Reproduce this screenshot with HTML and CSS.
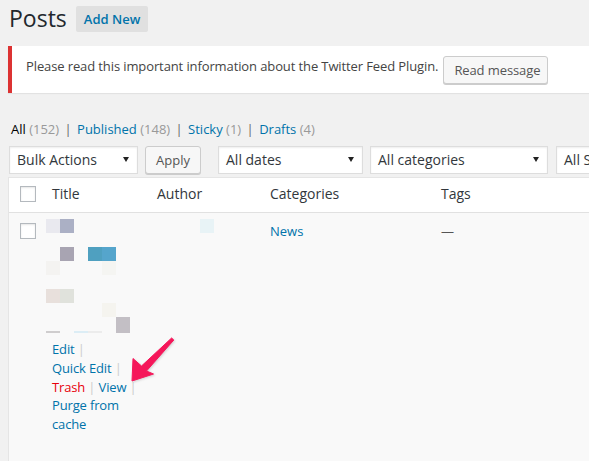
FILE: index.html
```html
<!DOCTYPE html>
<html>
<head>
<meta charset="utf-8">
<link rel="stylesheet" href="styles.css">
</head>
<body>
<div class="wrap">
  <div class="page-head">
    <h1 class="page-title">Posts</h1>
    <a class="add-new">Add New</a>
  </div>

  <div class="notice">
    <p class="notice-text">Please read this important information about the Twitter Feed Plugin.</p>
    <button class="btn btn-read">Read message</button>
  </div>

  <ul class="subsubsub">
    <li><a class="current">All <span class="count">(152)</span></a> <span class="sep">|</span></li>
    <li><a>Published <span class="count">(148)</span></a> <span class="sep">|</span></li>
    <li><a>Sticky <span class="count">(1)</span></a> <span class="sep">|</span></li>
    <li><a>Drafts <span class="count">(4)</span></a></li>
  </ul>

  <div class="tablenav">
    <div class="select select-bulk">Bulk Actions</div>
    <button class="btn btn-apply">Apply</button>
    <div class="select select-dates">All dates</div>
    <div class="select select-cats">All categories</div>
    <div class="select select-seo">All SEO Scores</div>
  </div>

  <table class="posts">
    <colgroup>
      <col class="c-check">
      <col class="c-title">
      <col class="c-author">
      <col class="c-cats">
      <col class="c-tags">
    </colgroup>
    <thead>
      <tr>
        <th class="check-col"><span class="cb"></span></th>
        <th>Title</th>
        <th>Author</th>
        <th>Categories</th>
        <th>Tags</th>
      </tr>
    </thead>
    <tbody>
      <tr>
        <td class="check-col body-check"><span class="cb"></span></td>
        <td class="title-cell">
          <div class="pixels">
            <i class="p-a"></i><i class="p-b"></i><i></i><i></i><i></i><i></i>
            <i></i><i></i><i></i><i></i><i></i><i></i>
            <i></i><i class="p-c"></i><i></i><i class="p-d"></i><i class="p-e"></i><i></i>
            <i class="p-f"></i><i></i><i></i><i></i><i class="p-g"></i><i></i>
            <i></i><i></i><i></i><i></i><i></i><i></i>
            <i class="p-h"></i><i class="p-i"></i><i></i><i></i><i></i><i></i>
            <i></i><i></i><i></i><i></i><i class="p-j"></i><i></i>
            <i></i><i></i><i></i><i></i><i></i><i class="p-k"></i>
            <i class="p-l"></i><i></i><i class="p-m"></i><i class="p-n"></i><i></i><i class="p-k"></i>
          </div>
          <div class="row-actions"><span class="ra"><a>Edit</a> |</span> <span class="ra"><a>Quick Edit</a> |</span> <span class="ra"><a class="trash">Trash</a> |</span> <span class="ra"><a>View</a> |</span> <span class="ra-purge"><a>Purge from cache</a></span></div>
        </td>
        <td class="author-cell"><i class="author-px"></i></td>
        <td><a class="cat-link">News</a></td>
        <td>—</td>
      </tr>
    </tbody>
  </table>
</div>

<svg class="arrow" width="56" height="56" viewBox="0 0 56 56">
  <polygon points="7,49 8,26.5 16.5,34 46.6,6 48.8,8 21.5,39 28.5,42" fill="#f5175a" stroke="#f5175a" stroke-width="1" stroke-linejoin="round"/>
</svg>
</body>
</html>
```

FILE: styles.css
```css
* { box-sizing: border-box; }

html, body { margin: 0; padding: 0; }

body {
  background: #f1f1f1;
  font-family: "Open Sans", "Liberation Sans", sans-serif;
  font-size: 13px;
  color: #444;
  width: 589px;
  height: 461px;
  overflow: hidden;
  position: relative;
}

.wrap { padding-left: 8px; }

/* heading */
.page-head {
  display: flex;
  align-items: center;
  padding-top: 4px;
}
.page-title {
  margin: 0;
  padding-left: 1px;
  font-size: 23px;
  font-weight: 400;
  line-height: 29px;
  color: #23282d;
}
.add-new {
  margin-left: 9px;
  padding: 4px 8px;
  background: #e0e0e0;
  border-radius: 2px;
  color: #0073aa;
  font-weight: 600;
  font-size: 13px;
  line-height: 18px;
}

/* notice */
.notice {
  margin-top: 13px;
  background: #fff;
  border-left: 4px solid #dc3232;
  box-shadow: 0 1px 1px rgba(0,0,0,.06);
  padding: 10px 12px 9px 14px;
  display: flex;
  align-items: flex-start;
  white-space: nowrap;
}
.notice-text {
  margin: 1px 0 0;
  line-height: 19px;
  color: #444;
  letter-spacing: -0.11px;
}

.btn {
  font-family: inherit;
  font-size: 13px;
  height: 28px;
  line-height: 26px;
  padding: 0 10px;
  border: 1px solid #ccc;
  background: #f7f7f7;
  border-radius: 3px;
  box-shadow: 0 1px 0 #ccc;
  color: #555;
  flex: none;
}
.btn-read { margin-left: 5px; width: 105px; letter-spacing: -0.1px; }

/* status links */
.subsubsub {
  list-style: none;
  margin: 23px 0 0;
  padding: 0 0 0 3px;
  line-height: 26px;
  color: #666;
  font-size: 13px;
  white-space: nowrap;
}
.subsubsub li { display: inline; }
.subsubsub a { color: #0073aa; }
.subsubsub a.current { color: #000; }
.subsubsub .sep { margin: 0 2px 0 2px; }
.count { color: #999; }

/* filters */
.tablenav {
  display: flex;
  margin-top: 4px;
  padding-left: 1px;
  white-space: nowrap;
}
.select {
  position: relative;
  flex: none;
  height: 28px;
  border: 1px solid #ddd;
  background: #fff;
  box-shadow: inset 0 1px 2px rgba(0,0,0,.07);
  font-size: 14px;
  line-height: 26px;
  padding: 0 7px;
  color: #32373c;
  overflow: hidden;
}
.select::after {
  content: "";
  position: absolute;
  right: 8px;
  top: 10px;
  border-left: 3px solid transparent;
  border-right: 3px solid transparent;
  border-top: 5px solid #222;
}
.select-bulk { width: 129px; }
.btn-apply { margin-left: 7px; width: 56px; }
.select-dates { margin-left: 17px; width: 145px; }
.select-cats { margin-left: 7px; width: 178px; }
.select-seo { margin-left: 8px; width: 150px; }

/* table */
.posts {
  margin-top: 3px;
  border-spacing: 0;
  border: 1px solid #e5e5e5;
  table-layout: fixed;
  width: 584px;
  background: #fff;
}
.c-check { width: 33px; }
.c-title { width: 105px; }
.c-author { width: 113px; }
.c-cats { width: 171px; }
.c-tags { width: 160px; }

.posts th {
  text-align: left;
  font-weight: 400;
  font-size: 14px;
  line-height: 19.6px;
  padding: 6px 10px 8px;
  color: #32373c;
  border-bottom: 1px solid #e1e1e1;
  vertical-align: top;
}
.posts td {
  padding: 9px 10px 40px;
  vertical-align: top;
  line-height: 19px;
  background: #f9f9f9;
  color: #555;
}
.posts .check-col { padding: 8px 0 0 11px; }
.posts .body-check { padding-top: 10px; }

.cb {
  display: block;
  width: 16px;
  height: 16px;
  border: 1px solid #b4b9be;
  background: #fff;
  box-shadow: inset 0 1px 2px rgba(0,0,0,.1);
}

.cat-link { color: #0073aa; }

/* pixelated title */
.pixels {
  display: grid;
  grid-template-columns: repeat(6, 14px);
  grid-template-rows: repeat(8, 14px) 2px;
  margin: -3px 0 0 -6px;
}
.pixels i { display: block; }
.p-a { background: #e9e9ef; }
.p-b { background: #abb0c5; }
.p-c { background: #a8a4b2; }
.p-d { background: #4fa0c0; }
.p-e { background: #55a5cc; }
.p-f { background: #f4f3f1; }
.p-g { background: #f5f5f2; }
.p-h { background: #e8e0dc; }
.p-i { background: #e0e2dc; }
.p-j { background: #f5f4ef; }
.p-k { background: #c3bfc5; }
.p-l { background: #cfcdce; }
.p-m { background: #dcedf5; }
.p-n { background: #ececec; }

.author-px {
  display: block;
  width: 14px;
  height: 14px;
  margin: -3px 0 0 43px;
  background: #e8f3f6;
}

/* row actions */
.row-actions {
  margin-top: 7.5px;
  margin-right: -5px;
  line-height: 18.75px;
  font-size: 13px;
  color: #ccc;
  letter-spacing: -0.15px;
}
.row-actions a { color: #0073aa; }
.row-actions a.trash { color: #e8000b; }
.ra { display: inline-block; white-space: nowrap; }

/* annotation arrow */
.arrow {
  position: absolute;
  left: 125px;
  top: 332px;
  filter: drop-shadow(1px 1px 1px rgba(0,0,0,.15));
}
```
